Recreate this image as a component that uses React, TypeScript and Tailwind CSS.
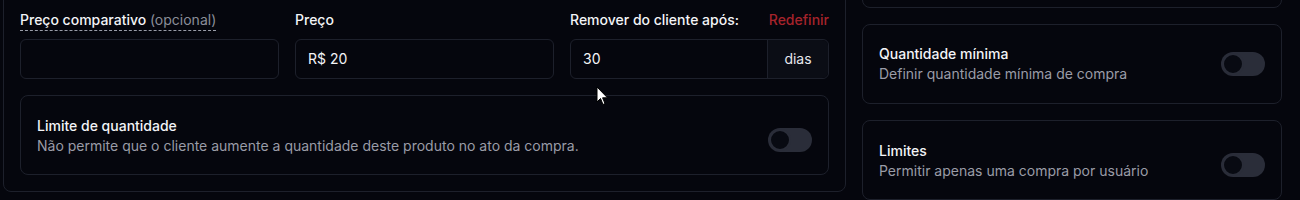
import React from 'react';

function Toggle({ className = '' }: { className?: string }) {
  return (
    <div
      className={`flex h-6 w-11 shrink-0 items-center rounded-full bg-[#2a2d39] p-[1px] ${className}`}
    >
      <div className="h-[22px] w-[22px] rounded-full border-2 border-[#2a2d39] bg-[#080a12]" />
    </div>
  );
}

function OptionCard({
  title,
  description,
  className = '',
  toggleClass = '',
}: {
  title: string;
  description: string;
  className?: string;
  toggleClass?: string;
}) {
  return (
    <div
      className={`flex h-20 items-center justify-between rounded-lg border border-[#1d202b] px-4 ${className}`}
    >
      <div className="flex flex-col">
        <p className="text-sm font-medium text-[#f3f4f7]">{title}</p>
        <p className="text-sm text-[#9a9ca7]">{description}</p>
      </div>
      <Toggle className={toggleClass} />
    </div>
  );
}

export default function App() {
  return (
    <div
      className="relative h-[200px] w-[1300px] overflow-hidden bg-[#05060d]"
      style={{ fontFamily: 'Inter, "Noto Sans", sans-serif' }}
    >
      <div className="flex items-start gap-4 pl-[3px] pr-[18px]">
        {/* main form card */}
        <div className="-mt-[9px] w-[843px] rounded-lg border border-[#1d202b] px-4 pt-4 pb-4">
          <div className="grid grid-cols-3 gap-4">
            <div className="flex flex-col">
              <div className="flex items-start pt-[2px]">
                <span className="border-b border-dashed border-[#9a9da8] text-sm font-medium leading-5 text-[#f3f4f7]">
                  Preço comparativo <span className="font-normal text-[#8b8e99]">(opcional)</span>
                </span>
              </div>
              <div className="mt-[8px] h-10 rounded-md border border-[#1d202b]" />
            </div>
            <div className="flex flex-col">
              <div className="flex pt-[2px]">
                <span className="text-sm font-medium leading-5 text-[#f3f4f7]">Preço</span>
              </div>
              <div className="mt-[9px] flex h-10 items-center rounded-md border border-[#1d202b] px-3 text-sm text-[#f3f4f7]">
                R$ 20
              </div>
            </div>
            <div className="flex flex-col">
              <div className="flex justify-between pt-[2px]">
                <span className="text-sm font-medium leading-5 text-[#f3f4f7]">
                  Remover do cliente após:
                </span>
                <span className="text-sm font-medium leading-5 text-[#a5232b]">Redefinir</span>
              </div>
              <div className="mt-[9px] flex h-10 rounded-md border border-[#1d202b]">
                <div className="flex flex-1 items-center px-3 text-sm text-[#f3f4f7]">30</div>
                <div className="flex w-[61px] items-center justify-center rounded-r-md border-l border-[#1d202b] bg-[#0b0d15] text-sm text-[#e6e7ec]">
                  dias
                </div>
              </div>
            </div>
          </div>
          <OptionCard
            className="mt-4 pt-[1px]"
            toggleClass="mt-2"
            title="Limite de quantidade"
            description="Não permite que o cliente aumente a quantidade deste produto no ato da compra."
          />
        </div>

        {/* side options */}
        <div className="-mt-[72px] flex w-[420px] flex-col gap-4">
          <div className="h-20 rounded-lg border border-[#1d202b]" />
          <OptionCard title="Quantidade mínima" description="Definir quantidade mínima de compra" />
          <OptionCard
            className="pt-[1px]"
            toggleClass="mt-2"
            title="Limites"
            description="Permitir apenas uma compra por usuário"
          />
        </div>
      </div>

      {/* mouse pointer */}
      <svg
        className="absolute left-[596px] top-[86px]"
        width="13"
        height="21"
        viewBox="0 0 13 21"
      >
        <path
          d="M1 1 L1 16 L4.5 12.5 L7 18.5 L9 17.6 L6.6 11.8 L11.5 11.8 Z"
          fill="#ffffff"
          stroke="#000000"
          strokeWidth="1"
          strokeLinejoin="round"
        />
      </svg>
    </div>
  );
}
